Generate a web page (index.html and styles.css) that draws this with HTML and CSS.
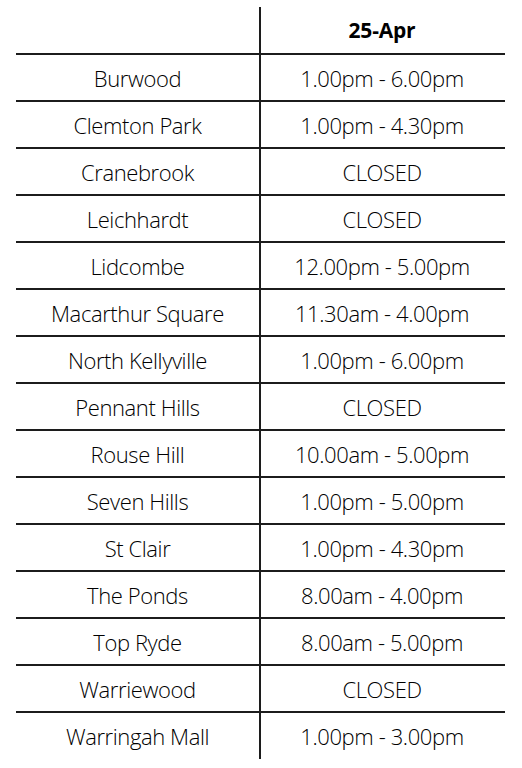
FILE: index.html
```html
<!DOCTYPE html>
<html>
<head>
<meta charset="utf-8">
<link rel="stylesheet" href="styles.css">
</head>
<body>
<div class="table">
  <div class="row head"><div class="cell"></div><div class="cell time">25-Apr</div></div>
  <div class="row"><div class="cell">Burwood</div><div class="cell time">1.00pm - 6.00pm</div></div>
  <div class="row"><div class="cell">Clemton Park</div><div class="cell time">1.00pm - 4.30pm</div></div>
  <div class="row"><div class="cell">Cranebrook</div><div class="cell time">CLOSED</div></div>
  <div class="row"><div class="cell">Leichhardt</div><div class="cell time">CLOSED</div></div>
  <div class="row"><div class="cell">Lidcombe</div><div class="cell time">12.00pm - 5.00pm</div></div>
  <div class="row"><div class="cell">Macarthur Square</div><div class="cell time">11.30am - 4.00pm</div></div>
  <div class="row"><div class="cell">North Kellyville</div><div class="cell time">1.00pm - 6.00pm</div></div>
  <div class="row"><div class="cell">Pennant Hills</div><div class="cell time">CLOSED</div></div>
  <div class="row"><div class="cell">Rouse Hill</div><div class="cell time">10.00am - 5.00pm</div></div>
  <div class="row"><div class="cell">Seven Hills</div><div class="cell time">1.00pm - 5.00pm</div></div>
  <div class="row"><div class="cell">St Clair</div><div class="cell time">1.00pm - 4.30pm</div></div>
  <div class="row"><div class="cell">The Ponds</div><div class="cell time">8.00am - 4.00pm</div></div>
  <div class="row"><div class="cell">Top Ryde</div><div class="cell time">8.00am - 5.00pm</div></div>
  <div class="row"><div class="cell">Warriewood</div><div class="cell time">CLOSED</div></div>
  <div class="row last"><div class="cell">Warringah Mall</div><div class="cell time">1.00pm - 3.00pm</div></div>
</div>
</body>
</html>
```
FILE: styles.css
```css
html, body {
  margin: 0;
  padding: 0;
  background: #ffffff;
}
body {
  font-family: "Open Sans", "Liberation Sans", sans-serif;
  font-weight: 300;
  font-size: 22px;
  letter-spacing: -0.4px;
  color: #000000;
}
.table {
  margin: 7px 0 0 16px;
  width: 489px;
  display: flex;
  flex-direction: column;
}
.row {
  display: grid;
  grid-template-columns: 243px 244px;
  height: 45px;
  border-top: 2px solid #1c1c1c;
}
.row.head {
  border-top: none;
  height: 46px;
}
.row.last {
  height: 46px;
}
.cell {
  display: flex;
  align-items: center;
  justify-content: center;
  white-space: nowrap;
}
.time {
  border-left: 2px solid #1c1c1c;
}
.head .time {
  font-weight: 700;
  font-size: 21px;
  letter-spacing: -0.2px;
}
```
